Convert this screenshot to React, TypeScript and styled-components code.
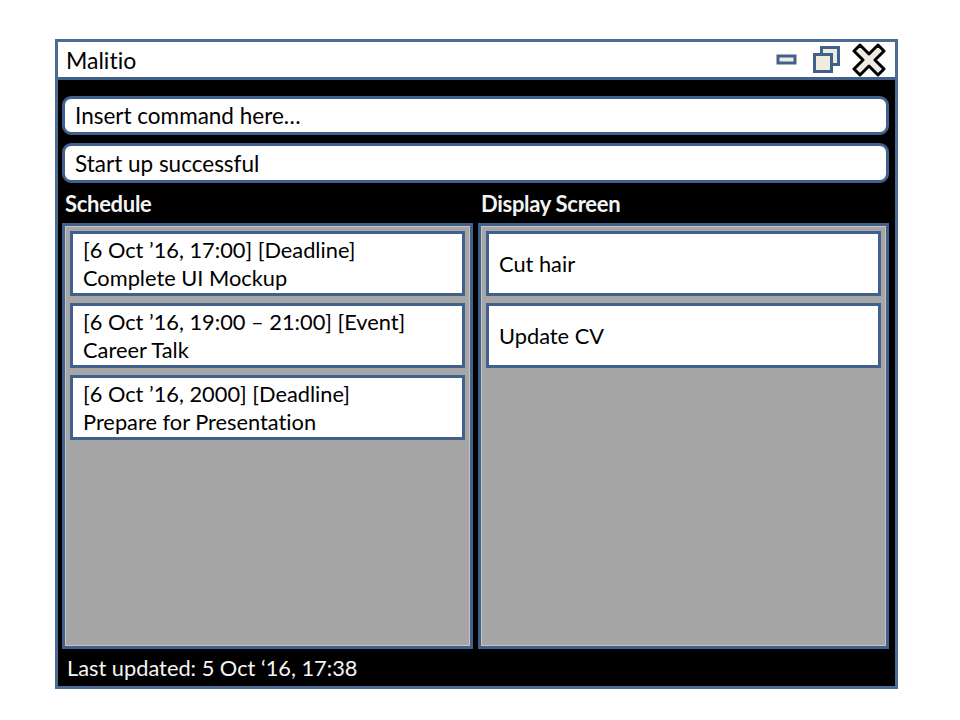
import React from "react";
import styled, { createGlobalStyle } from "styled-components";

const Global = createGlobalStyle`
  html, body { margin: 0; padding: 0; background: #ffffff; }
  body {
    font-family: "Lato", "Open Sans", sans-serif;
    font-variant-ligatures: none;
    font-feature-settings: "liga" 0, "dlig" 0;
  }
`;

const BLUE = "#41608b";

const Page = styled.div`
  width: 960px;
  height: 720px;
  padding: 39px 0 0 55px;
  box-sizing: border-box;
`;

const Window = styled.div`
  width: 843px;
  height: 650px;
  box-sizing: border-box;
  border: 3px solid #4c6c96;
  background: #000000;
  display: flex;
  flex-direction: column;
`;

const TitleBar = styled.div`
  height: 38px;
  box-sizing: border-box;
  background: #ffffff;
  border-bottom: 3px solid ${BLUE};
  display: flex;
  align-items: center;
  padding: 0 9px 0 8px;
`;

const Title = styled.div`
  flex: 1;
  font-size: 23px;
  color: #000;
  padding-top: 1px;
`;

const Controls = styled.div`
  display: flex;
  align-items: center;
`;

const Body = styled.div`
  flex: 1;
  display: flex;
  flex-direction: column;
  padding: 16px 6px 0 4px;
  min-height: 0;
`;

const Field = styled.div<{ $h: number; $mb?: number }>`
  height: ${(p) => p.$h}px;
  margin-bottom: ${(p) => p.$mb ?? 0}px;
  box-sizing: border-box;
  background: #ffffff;
  border: 3px solid ${BLUE};
  border-radius: 9px;
  display: flex;
  align-items: center;
  padding: 0 10px;
  font-size: 22.5px;
  color: #000;
`;

const Columns = styled.div`
  flex: 1;
  display: grid;
  grid-template-columns: 1fr 1fr;
  grid-template-rows: 40px 1fr;
  column-gap: 5px;
  min-height: 0;
`;

const Heading = styled.div`
  color: #f4f4f4;
  font-weight: 700;
  font-size: 22px;
  display: flex;
  align-items: center;
  padding-left: 3px;
  letter-spacing: -0.3px;
`;

const Panel = styled.div`
  box-sizing: border-box;
  background: #a6a6a6;
  border: 3px solid ${BLUE};
  box-shadow: inset 0 0 0 1px #c4c4c4;
  padding: 5px 5px;
  display: flex;
  flex-direction: column;
  gap: 7px;
`;

const Item = styled.div`
  height: 65px;
  box-sizing: border-box;
  background: #ffffff;
  border: 3px solid ${BLUE};
  padding: 0 10px;
  display: flex;
  flex-direction: column;
  justify-content: center;
  font-size: 21.8px;
  line-height: 28px;
  color: #000;
`;

const Footer = styled.div`
  height: 37px;
  display: flex;
  align-items: center;
  padding-left: 5px;
  color: #f4f4f4;
  font-size: 21.8px;
`;

const IconBox = styled.svg<{ $ml?: number }>`
  display: block;
  margin-left: ${(p) => p.$ml ?? 0}px;
`;

const schedule = [
  ["[6 Oct \u201916, 17:00]  [Deadline]", "Complete UI Mockup"],
  ["[6 Oct \u201916, 19:00 \u2013 21:00]  [Event]", "Career Talk"],
  ["[6 Oct \u201916, 2000]  [Deadline]", "Prepare for Presentation"],
];

const display = ["Cut hair", "Update CV"];

export default function App() {
  return (
    <>
      <Global />
      <Page>
        <Window>
          <TitleBar>
            <Title>Malitio</Title>
            <Controls>
              <IconBox width="22" height="12" viewBox="0 0 22 12">
                <rect x="2" y="2" width="17" height="7" fill="#eeece1" stroke={BLUE} strokeWidth="3" />
              </IconBox>
              <IconBox $ml={14} width="30" height="30" viewBox="0 0 30 30">
                <rect x="9.5" y="2.5" width="17" height="17" fill="#eeece1" stroke={BLUE} strokeWidth="3" />
                <rect x="2.5" y="9.5" width="17" height="17" fill="#eeece1" stroke={BLUE} strokeWidth="3" />
              </IconBox>
              <IconBox $ml={10} width="34" height="34" viewBox="0 0 34 34">
                <polygon
                  points="2,8 8,2 17,11 26,2 32,8 23,17 32,26 26,32 17,23 8,32 2,26 11,17"
                  fill="#eeece1"
                  stroke="#000"
                  strokeWidth="3"
                  strokeLinejoin="round"
                />
              </IconBox>
            </Controls>
          </TitleBar>
          <Body>
            <Field $h={39} $mb={8}>Insert command here…</Field>
            <Field $h={40}>Start up successful</Field>
            <Columns>
              <Heading>Schedule</Heading>
              <Heading>Display Screen</Heading>
              <Panel>
                {schedule.map(([a, b]) => (
                  <Item key={b}>
                    <div>{a}</div>
                    <div>{b}</div>
                  </Item>
                ))}
              </Panel>
              <Panel>
                {display.map((d) => (
                  <Item key={d}>{d}</Item>
                ))}
              </Panel>
            </Columns>
            <Footer>Last updated: 5 Oct {"\u2018"}16, 17:38</Footer>
          </Body>
        </Window>
      </Page>
    </>
  );
}
